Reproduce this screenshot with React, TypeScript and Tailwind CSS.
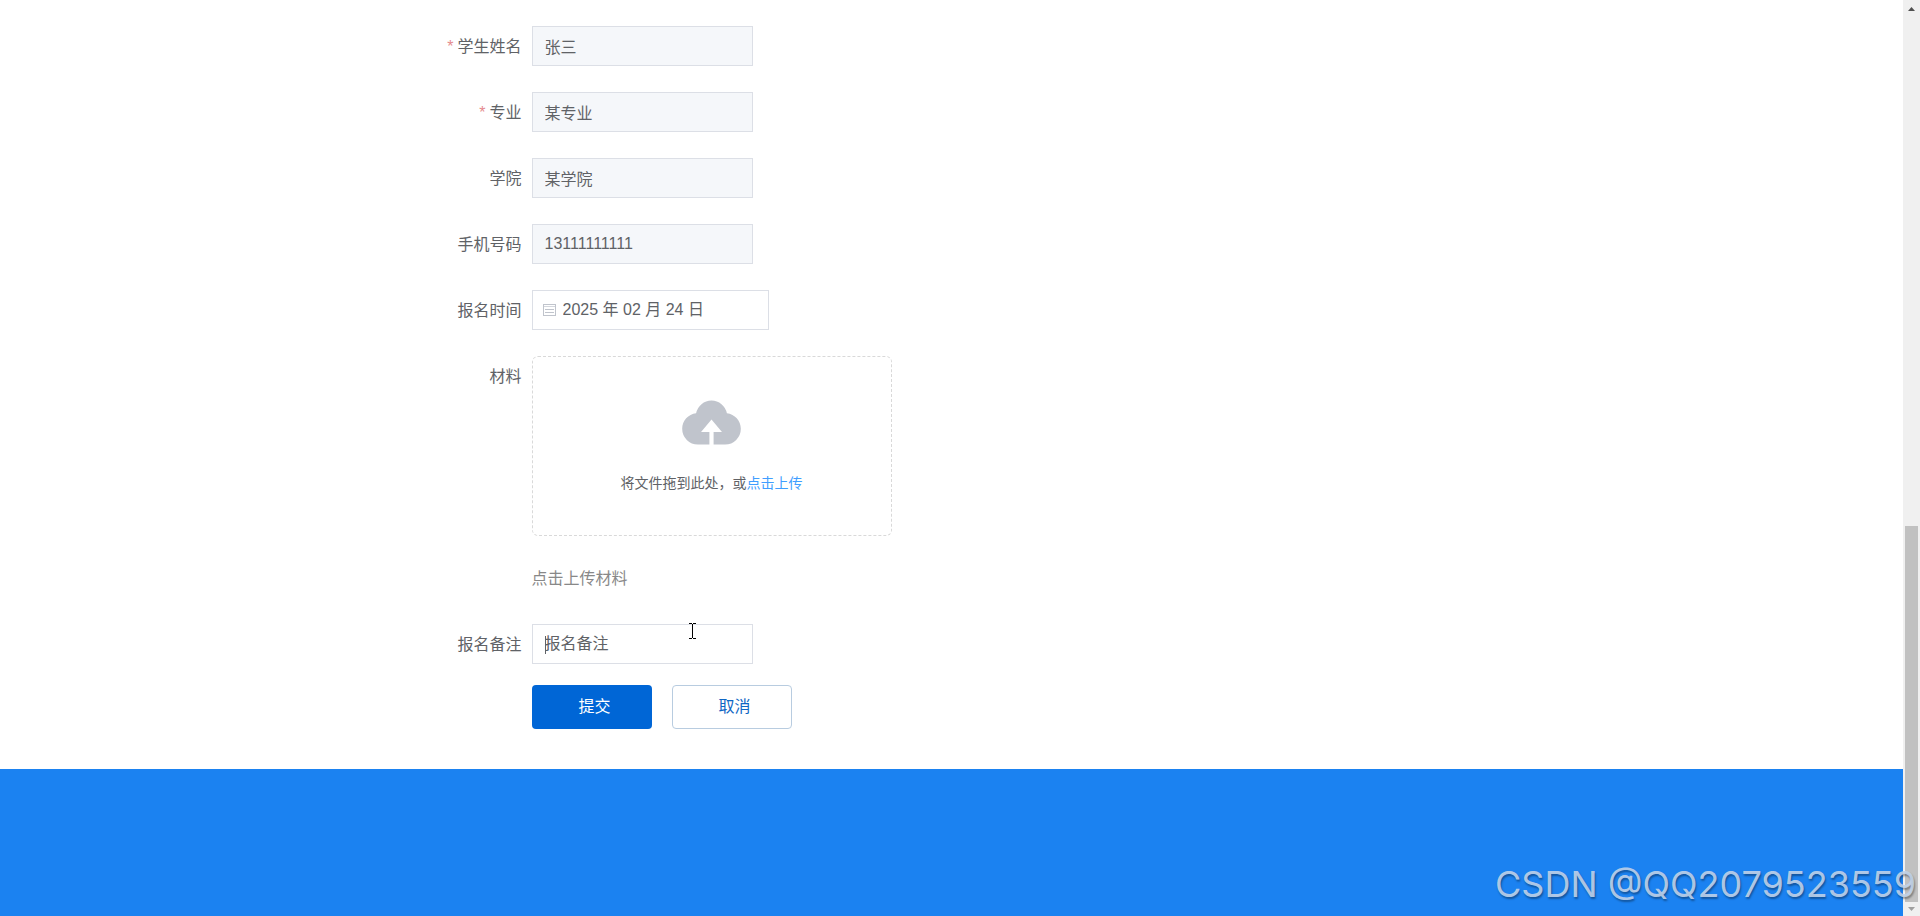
import { ReactNode } from 'react';

const inputClass = 'block h-10 w-[221px] border border-[#dcdfe6] px-3 text-base text-[#606266] outline-none';

type RowProps = {
  label: string;
  id?: string;
  required?: boolean;
  children: ReactNode;
};

const FormRow = ({ label, id, required, children }: RowProps) => {
  return (
    <div className="flex items-start">
      <label htmlFor={id} className="w-[180px] shrink-0 pr-[10px] text-right text-base leading-[42px] text-[#606266]">
        {required && <span className="mr-1 text-[#e58a8f]">*</span>}
        {label}
      </label>
      <div className="relative">{children}</div>
    </div>
  );
};

const CalendarIcon = () => (
  <svg className="h-[13px] w-[13px] shrink-0" viewBox="0 0 13 13" fill="none" stroke="#c0c4cc" aria-hidden="true">
    <rect x="0.5" y="0.5" width="12" height="11" />
    <path d="M1 2.5h11" stroke="#d4d7dd" />
    <path d="M2 5.5h9M2 8.5h9" />
  </svg>
);

const UploadIcon = () => (
  <svg className="h-[67px] w-[67px]" viewBox="0 0 1024 1024" fill="#c0c4cc" aria-hidden="true">
    <path d="M544 864V672h128L512 480 352 672h128v192H320v-1.6c-5.4.3-10.5 1.6-16 1.6A240 240 0 0 1 64 624c0-123.1 93.1-223.5 212.6-237.2A239.8 239.8 0 0 1 512 192a239.9 239.9 0 0 1 235.5 194.8c119.5 13.7 212.5 114.1 212.5 237.2a240 240 0 0 1-240 240c-5.4 0-10.6-1.3-16-1.6v1.6z" />
  </svg>
);

const ScrollBar = () => {
  return (
    <div className="flex w-[17px] shrink-0 flex-col items-center bg-[#f0f0f0]" aria-hidden="true">
      <div className="flex h-[17px] items-center">
        <svg className="h-1 w-[7px]" viewBox="0 0 7 4"><path d="M3.5 0L7 4H0z" fill="#505050" /></svg>
      </div>
      {/* Track above the thumb, then the thumb itself */}
      <div className="grow-[509] basis-0"></div>
      <div className="w-[13px] grow-[376] basis-0 bg-[#c1c1c1]"></div>
      <div className="flex h-[14px] items-center">
        <svg className="h-1 w-[7px]" viewBox="0 0 7 4"><path d="M0 0h7L3.5 4z" fill="#a0a0a0" /></svg>
      </div>
    </div>
  );
};

const App = () => {
  return (
    <div className="relative flex min-h-screen bg-white font-['Liberation_Sans','Noto_Sans_CJK_SC',sans-serif]">
      <main className="flex min-w-0 grow flex-col">
        <div className="mx-auto w-full max-w-[1200px] pt-[26px] pb-10">
          <form className="flex flex-col" onSubmit={(e) => e.preventDefault()}>
            <div className="flex flex-col gap-6">
              <FormRow label="学生姓名" id="name" required>
                <input id="name" className={`${inputClass} bg-[#f5f7fa]`} defaultValue="张三" readOnly />
              </FormRow>
              <FormRow label="专业" id="major" required>
                <input id="major" className={`${inputClass} bg-[#f5f7fa]`} defaultValue="某专业" readOnly />
              </FormRow>
              <FormRow label="学院" id="college">
                <input id="college" className={`${inputClass} bg-[#f5f7fa]`} defaultValue="某学院" readOnly />
              </FormRow>
              <FormRow label="手机号码" id="phone">
                <input id="phone" className={`${inputClass} bg-[#f5f7fa]`} defaultValue="13111111111" readOnly />
              </FormRow>
              <FormRow label="报名时间" id="date">
                <div className="flex h-10 w-[237px] items-center gap-[7px] border border-[#dcdfe6] px-[10px]">
                  <CalendarIcon />
                  <input id="date" className="min-w-0 grow text-base text-[#606266] outline-none" defaultValue="2025 年 02 月 24 日" />
                </div>
              </FormRow>
              <FormRow label="材料">
                <div className="flex h-[180px] w-[360px] flex-col items-center gap-[18px] rounded-md border border-dashed border-[#d9d9d9] pt-[31px]">
                  <UploadIcon />
                  <p className="text-sm text-[#606266]">
                    {'将文件拖到此处\uff0c或'}
                    <a href="#upload" className="text-[#409eff]">点击上传</a>
                  </p>
                </div>
                <p className="mt-[22px] text-base leading-[42px] text-[#888888]">点击上传材料</p>
              </FormRow>
              <FormRow label="报名备注" id="remark">
                <input id="remark" className={`${inputClass} bg-white placeholder:text-[#606266]`} placeholder="报名备注" />
                {/* Text caret and mouse pointer */}
                <span className="absolute top-3 left-[13px] h-[18px] w-px bg-[#606266]"></span>
                <svg className="absolute -top-px left-[157px] h-4 w-[7px]" viewBox="0 0 7 16" fill="none" stroke="#000" aria-hidden="true">
                  <path d="M0 0.5h3M4 0.5h3M3.5 1v14M0 15.5h3M4 15.5h3" />
                </svg>
              </FormRow>
            </div>

            <div className="mt-[19px] flex gap-5 pl-[180px]">
              <button type="submit" className="h-11 w-[120px] rounded bg-[#0066d6] pl-[6px] text-base text-white">提交</button>
              <button type="button" className="h-11 w-[120px] rounded border border-[#b8cce0] bg-white pl-[6px] text-base text-[#0f66c4]">取消</button>
            </div>
          </form>
        </div>

        <footer className="grow bg-[#1b82f1]"></footer>
      </main>

      <ScrollBar />

      <div className="absolute right-1 bottom-3 font-['Inter',sans-serif] text-4xl whitespace-nowrap text-[#c3d4ea]/90 [text-shadow:1px_2px_2px_rgba(0,0,0,0.35)]">
        CSDN @QQ2079523559
      </div>
    </div>
  );
};

export default App;
